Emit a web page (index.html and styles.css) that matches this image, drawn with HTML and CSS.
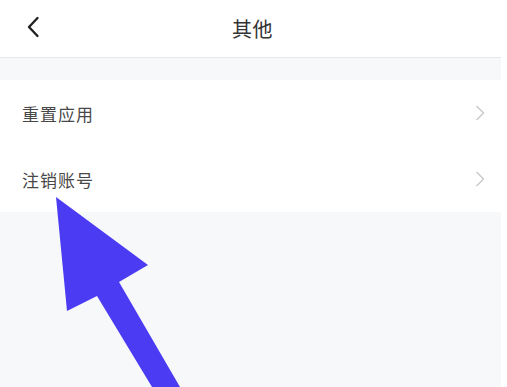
FILE: index.html
```html
<!DOCTYPE html>
<html lang="zh">
<head>
<meta charset="utf-8">
<link rel="stylesheet" href="styles.css">
</head>
<body>
<div class="screen">
  <header class="header">
    <svg class="back" width="14" height="22" viewBox="0 0 14 22"><path d="M11.5 2 L3 11 L11.5 20" fill="none" stroke="#222" stroke-width="2.4" stroke-linecap="round" stroke-linejoin="round"/></svg>
    <div class="title">其他</div>
  </header>
  <div class="gap"></div>
  <ul class="list">
    <li class="row"><span class="label">重置应用</span><svg class="chev" width="10" height="16" viewBox="0 0 10 16"><path d="M1.5 1 L8.5 8 L1.5 15" fill="none" stroke="#c9c9c9" stroke-width="1.4"/></svg></li>
    <li class="row"><span class="label">注销账号</span><svg class="chev" width="10" height="16" viewBox="0 0 10 16"><path d="M1.5 1 L8.5 8 L1.5 15" fill="none" stroke="#c9c9c9" stroke-width="1.4"/></svg></li>
  </ul>
</div>
<svg class="arrow" width="507" height="387" viewBox="0 0 507 387"><polygon points="56,197 148,265 119,282 180,387 152,387 97,296 67,311" fill="#4b3bf3"/></svg>
</body>
</html>
```
FILE: styles.css
```css
html, body {
  margin: 0;
  padding: 0;
  background: #ffffff;
}
body {
  width: 507px;
  height: 387px;
  overflow: hidden;
  position: relative;
  font-family: "Noto Sans CJK SC", "Noto Sans", sans-serif;
}
.screen {
  width: 501px;
  height: 387px;
  background: #f7f8fa;
}
.header {
  height: 57px;
  background: #ffffff;
  border-bottom: 1px solid #e8e8e8;
  display: flex;
  align-items: center;
  justify-content: center;
  position: relative;
}
.back {
  position: absolute;
  left: 26px;
  top: 16px;
}
.title {
  font-size: 20px;
  color: #333333;
  letter-spacing: 0.5px;
  margin-left: 4px;
}
.gap {
  height: 22px;
}
.list {
  list-style: none;
  margin: 0;
  padding: 0;
  background: #ffffff;
}
.row {
  height: 66px;
  display: flex;
  align-items: center;
  justify-content: space-between;
  padding: 0 16px 0 22px;
}
.label {
  font-size: 17px;
  color: #484848;
  letter-spacing: 1px;
}
.arrow {
  position: absolute;
  left: 0;
  top: 0;
}
```
